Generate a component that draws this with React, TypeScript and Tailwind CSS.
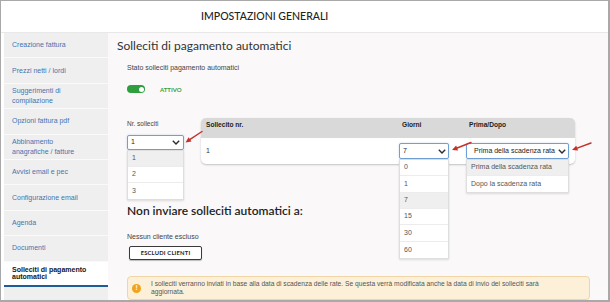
import React from "react";

type Pt = [number, number];

function Arrow({ tail, tip }: { tail: Pt; tip: Pt }) {
  const dx = tip[0] - tail[0];
  const dy = tip[1] - tail[1];
  const len = Math.sqrt(dx * dx + dy * dy);
  const ux = dx / len;
  const uy = dy / len;
  const px = -uy;
  const py = ux;
  const hl = 5.5;
  const hw = 2.6;
  const bx = tip[0] - ux * hl;
  const by = tip[1] - uy * hl;
  const pts = `${tip[0]},${tip[1]} ${bx + px * hw},${by + py * hw} ${bx - px * hw},${by - py * hw}`;
  return (
    <g>
      <line x1={tail[0]} y1={tail[1]} x2={bx} y2={by} stroke="#c4302b" strokeWidth="1.4" strokeLinecap="round" />
      <polygon points={pts} fill="#c4302b" />
    </g>
  );
}

function Chevron() {
  return (
    <svg width="8" height="5" viewBox="0 0 8 5" className="shrink-0">
      <path d="M0.8 0.8 L4 4 L7.2 0.8" fill="none" stroke="#2b2b2b" strokeWidth="1.4" />
    </svg>
  );
}

function Options({ items, sel, h }: { items: string[]; sel: number; h: string }) {
  return (
    <div className="absolute left-0 top-full w-full bg-white border border-[#dedede] shadow-[0_1px_2px_rgba(0,0,0,0.12)] z-10">
      {items.map((o, i) => (
        <div
          key={o}
          className={
            (i === sel ? "bg-[#efefef] " : "bg-white ") +
            (i < items.length - 1 ? "border-b border-[#ececec] " : "") +
            h +
            " flex items-center pl-[4px] text-[7px] text-[#555]"
          }
        >
          {o}
        </div>
      ))}
    </div>
  );
}

const sideItems: { label: string[]; active?: boolean }[] = [
  { label: ["Creazione fattura"] },
  { label: ["Prezzi netti / lordi"] },
  { label: ["Suggerimenti di", "compilazione"] },
  { label: ["Opzioni fattura pdf"] },
  { label: ["Abbinamento", "anagrafiche / fatture"] },
  { label: ["Avvisi email e pec"] },
  { label: ["Configurazione email"] },
  { label: ["Agenda"] },
  { label: ["Documenti"] },
  { label: ["Solleciti di pagamento", "automatici"], active: true },
];

export default function App() {
  return (
    <div className="relative w-[610px] h-[302px] bg-white border-t border-l border-r-2 border-b-2 border-[#a9a9a9] flex flex-col overflow-hidden font-['Liberation_Sans',Arial,sans-serif]">
      <div className="h-[32px] shrink-0 flex items-center pl-[200px] border-b border-[#e8e8e8] font-['Lato',sans-serif] font-medium text-[10.5px] text-[#222]">
        IMPOSTAZIONI GENERALI
      </div>
      <div className="flex flex-1 pl-[3px]">
        <aside className="w-[104px] bg-[#efefef] flex flex-col">
          {sideItems.map((it) =>
            it.active ? (
              <div
                key={it.label[0]}
                className="h-[25.4px] bg-white border-b-2 border-[#1f5d99] flex flex-col justify-center pl-[8px] text-[7px] leading-[7.5px] font-bold text-[#151515]"
              >
                {it.label.map((l) => (
                  <span key={l}>{l}</span>
                ))}
              </div>
            ) : (
              <div
                key={it.label[0]}
                className="h-[25.4px] border-b border-[#fafafa] flex flex-col justify-center pl-[8px] text-[7px] leading-[10px] text-[#4474b0]"
              >
                {it.label.map((l) => (
                  <span key={l}>{l}</span>
                ))}
              </div>
            )
          )}
        </aside>
        <main className="flex-1 bg-[#faf8f8] pl-[9px] pt-[4px] flex flex-col">
          <h1 className="font-['Lato',sans-serif] text-[12px] leading-[17px] text-[#333]">
            Solleciti di pagamento automatici
          </h1>
          <div className="pl-[10px] flex flex-col">
            <p className="mt-[8px] text-[7px] leading-[11px] text-[#444]">Stato solleciti pagamento automatici</p>
            <div className="mt-[12px] h-[8px] flex items-center">
              <div className="w-[18px] h-[8px] rounded-full bg-[#2e9e3e] flex items-center justify-end pr-[1.5px]">
                <div className="w-[5px] h-[5px] rounded-full bg-white" />
              </div>
              <span className="ml-[15px] font-['Lato',sans-serif] font-bold text-[6px] text-[#3a9d3a]">ATTIVO</span>
            </div>
            <div className="mt-[25px] flex items-start">
              <div className="w-[57px] flex flex-col">
                <p className="pt-[1px] text-[6.5px] leading-[10px] text-[#444]">Nr. solleciti</p>
                <div className="relative mt-[6px]">
                  <div className="h-[15px] bg-white border border-[#6f9fd3] rounded-[2px] flex items-center justify-between pl-[3px] pr-[3px] text-[7px] text-[#222] shadow-[0_0_2px_rgba(80,140,210,0.35)]">
                    <span>1</span>
                    <Chevron />
                  </div>
                  <Options items={["1", "2", "3"]} sel={0} h="h-[16px]" />
                </div>
              </div>
              <div className="ml-[17px] w-[374px] bg-white rounded-[5px] shadow-[0_1px_2px_rgba(0,0,0,0.22)] flex flex-col">
                <div className="h-[20px] bg-[#d9d9d9] rounded-t-[5px] grid grid-cols-[198px_67px_1fr] pt-[2px] text-[6.6px] leading-[9px] font-bold text-[#222]">
                  <span className="pl-[5px]">Sollecito nr.</span>
                  <span className="pl-[3px]">Giorni</span>
                  <span className="pl-[3px]">Prima/Dopo</span>
                </div>
                <div className="h-[26px] grid grid-cols-[198px_67px_1fr] items-center text-[7px] text-[#333]">
                  <span className="pl-[5px]">1</span>
                  <div className="relative w-[50px]">
                    <div className="h-[15.5px] bg-white border border-[#6f9fd3] rounded-[2px] flex items-center justify-between pl-[3px] pr-[2px] text-[7px] text-[#222] shadow-[0_0_2px_rgba(80,140,210,0.35)]">
                      <span>7</span>
                      <Chevron />
                    </div>
                    <Options items={["0", "1", "7", "15", "30", "60"]} sel={2} h="h-[16.4px]" />
                  </div>
                  <div className="relative w-[103px]">
                    <div className="h-[15.5px] bg-white border border-[#6f9fd3] rounded-[2px] flex items-center justify-between pl-[7px] pr-[2px] text-[7px] text-[#222] shadow-[0_0_2px_rgba(80,140,210,0.35)]">
                      <span>Prima della scadenza rata</span>
                      <Chevron />
                    </div>
                    <Options items={["Prima della scadenza rata", "Dopo la scadenza rata"]} sel={0} h="h-[16.3px]" />
                  </div>
                </div>
              </div>
            </div>
            <h2 className="mt-[38px] font-['Lato',sans-serif] font-semibold text-[12px] leading-[17px] text-[#222]">
              Non inviare solleciti automatici a:
            </h2>
            <p className="mt-[13px] text-[7px] leading-[10px] text-[#444]">Nessun cliente escluso</p>
            <div className="mt-[4px] ml-[2px] w-[73px] h-[14px] bg-white border border-[#3a3a3a] rounded-[2px] shadow-[0_1px_1px_rgba(0,0,0,0.25)] flex items-center justify-center font-['Lato',sans-serif] font-bold text-[5.8px] tracking-[0.2px] text-[#222]">
              ESCLUDI CLIENTI
            </div>
            <div className="mt-[16px] w-[463px] bg-[#fcf0d9] border border-[#f0d6a6] rounded-[4px] flex items-center pl-[4px] pt-[3px] pb-[3px]">
              <div className="w-[9px] h-[9px] rounded-full bg-[#f0a31c] flex items-center justify-center text-white font-bold text-[6.5px] leading-none shrink-0">
                !
              </div>
              <p className="ml-[10px] w-[420px] text-[6.7px] leading-[8px] text-[#555]">
                I solleciti verranno inviati in base alla data di scadenza delle rate. Se questa verrà modificata anche la data di invio dei solleciti sarà aggiornata.
              </p>
            </div>
          </div>
        </main>
      </div>
      <svg className="absolute left-0 top-0 pointer-events-none z-20" width="610" height="302">
        <Arrow tail={[201, 130.5]} tip={[184.5, 141.5]} />
        <Arrow tail={[470, 141.5]} tip={[451, 149]} />
        <Arrow tail={[590, 142]} tip={[571, 149]} />
      </svg>
    </div>
  );
}
